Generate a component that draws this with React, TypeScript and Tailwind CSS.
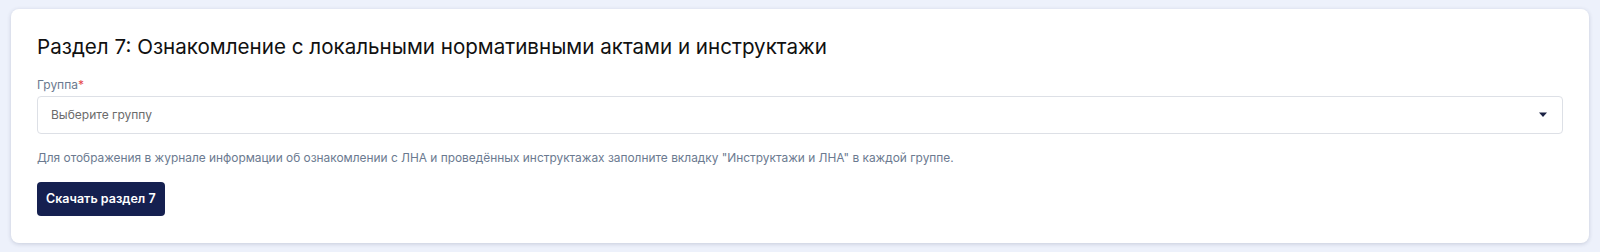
export default function App() {
  return (
    <div className="min-h-[252px] w-full bg-[#edf1fb] pl-[11px] pr-[11px] pt-[9px] pb-[13px] font-['Inter','Noto_Sans',sans-serif]">
      <div className="flex flex-col rounded-lg bg-white px-[26px] pt-[24px] pb-[27px] shadow-[0_1px_4px_rgba(30,40,80,0.18)]">
        <h2 className="text-[20.6px] leading-[28px] text-[#111111]">
          Раздел 7: Ознакомление с локальными нормативными актами и инструктажи
        </h2>

        <label className="mt-[16px] text-[12px] leading-[16px] text-[#6b7a90]">
          Группа<span className="text-[#e5484d]">*</span>
        </label>
        <div className="mt-[3px] flex h-[38px] items-center justify-between rounded-[4px] border border-[#dde0e6] pl-[13px] pr-[12px]">
          <span className="text-[12px] text-[#6b6b6b]">Выберите группу</span>
          <svg width="10" height="6" viewBox="0 0 10 6" className="mr-[2px]">
            <path d="M1 0.5 L9 0.5 L5 5 Z" fill="#1b2244" />
          </svg>
        </div>

        <p className="mt-[16px] text-[11.9px] leading-[16px] text-[#6b7a90]">
          Для отображения в журнале информации об ознакомлении с ЛНА и проведённых инструктажах заполните вкладку "Инструктажи и ЛНА" в каждой группе.
        </p>

        <div className="mt-[16px] flex">
          <button className="h-[34px] rounded-[4px] bg-[#152050] px-[9px] text-[12.5px] font-semibold text-white">
            Скачать раздел 7
          </button>
        </div>
      </div>
    </div>
  );
}
